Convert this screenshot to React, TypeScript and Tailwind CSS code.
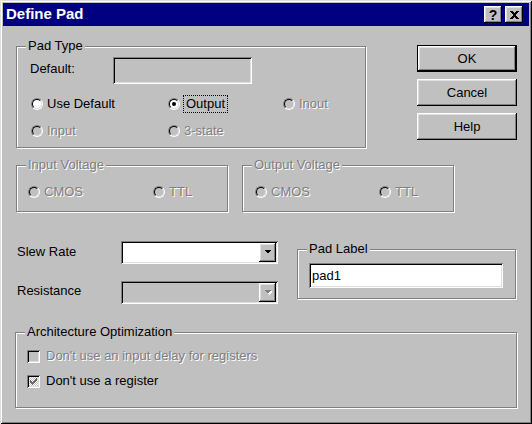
import type { ReactNode } from "react"

const raised =
  "shadow-[inset_-1px_-1px_#000,inset_1px_1px_#fff,inset_-2px_-2px_#808080,inset_2px_2px_#dfdfdf]"
const sunken =
  "shadow-[inset_1px_1px_#808080,inset_-1px_-1px_#fff,inset_2px_2px_#000,inset_-2px_-2px_#dfdfdf]"
const dim = "text-[#808080] [text-shadow:1px_1px_0_#fff]"

function Group({ label, className, children }: { label: string; className: string; children?: ReactNode }) {
  return (
    <div className={`relative border border-[#808080] shadow-[inset_1px_1px_#fff,1px_1px_#fff] ${className}`}>
      <span className={`absolute left-[9px] -top-[9px] px-[2px] leading-4 bg-[#c0c0c0] ${label.includes("Voltage") ? dim : ""}`}>
        {label}
      </span>
      {children}
    </div>
  )
}

function Radio({ label, checked, disabled, focus }: { label: string; checked?: boolean; disabled?: boolean; focus?: boolean }) {
  return (
    <div className="flex items-center h-[18px]">
      <span className="relative w-3 h-3 shrink-0 rounded-full border border-t-[#808080] border-l-[#808080] border-b-white border-r-white">
        <span
          className={`block w-full h-full rounded-full border border-t-black border-l-black border-b-[#dfdfdf] border-r-[#dfdfdf] ${disabled ? "bg-[#c0c0c0]" : "bg-white"}`}
        />
        {checked && <span className="absolute left-[3px] top-[3px] w-1 h-1 rounded-full bg-black" />}
      </span>
      {focus ? (
        <span className="ml-[3px] px-[2px] border border-dotted border-black leading-4">{label}</span>
      ) : (
        <span className={`ml-1 leading-4 ${disabled ? dim : ""}`}>{label}</span>
      )}
    </div>
  )
}

function Check({ label, checked, disabled }: { label: string; checked?: boolean; disabled?: boolean }) {
  return (
    <div className="flex items-center h-[18px]">
      <span
        className={`relative w-[13px] h-[13px] shrink-0 ${sunken} ${checked ? "bg-[repeating-conic-gradient(#fff_0_25%,#c0c0c0_0_50%)] bg-[length:2px_2px]" : "bg-[#c0c0c0]"}`}
      >
        {checked && (
          <svg className="absolute left-[3px] top-[3px]" width="7" height="7" viewBox="0 0 7 7" shapeRendering="crispEdges">
            <path
              fill="#6b6b6b"
              d="M6 0h1v3h-1v1h-1v1h-1v1h-1v1h-1v-1h-1v-1h-1v-3h1v1h1v1h1v-1h1v-1h1z"
            />
          </svg>
        )}
      </span>
      <span className={`ml-[6px] leading-4 ${disabled ? dim : ""}`}>{label}</span>
    </div>
  )
}

function Combo({ disabled }: { disabled?: boolean }) {
  return (
    <div className={`flex justify-end w-[157px] h-[23px] p-[2px] ${sunken} ${disabled ? "bg-[#c0c0c0]" : "bg-white"}`}>
      <div className={`flex items-center justify-center w-[17px] h-[19px] bg-[#c0c0c0] ${raised}`}>
        <svg width="8" height="5" viewBox="0 0 8 5" shapeRendering="crispEdges">
          {disabled && <path fill="#fff" d="M2 1h7l-3.5 4z" />}
          <path fill={disabled ? "#808080" : "#000"} d="M0.5 0h7l-3.5 4z" />
        </svg>
      </div>
    </div>
  )
}

function Btn({ label, def }: { label: string; def?: boolean }) {
  return (
    <div
      className={`flex items-center justify-center w-[100px] h-[27px] ${def ? "border border-black" : ""} ${raised}`}
    >
      {label}
    </div>
  )
}

export default function App() {
  return (
    <div className="w-[532px] h-[424px] bg-[#c0c0c0] p-[3px] flex flex-col font-['Liberation_Sans',Arial,sans-serif] text-[13px] text-black shadow-[inset_1px_1px_#dfdfdf,inset_-1px_-1px_#000,inset_2px_2px_#fff,inset_-2px_-2px_#808080]">
      {/* title bar */}
      <div className="flex items-center h-[23px] bg-[#000080] pl-[3px] pr-[6px]">
        <span className="text-white font-bold text-[15px]">Define Pad</span>
        <div className="ml-auto flex gap-[3px]">
          <div className={`flex items-center justify-center w-[18px] h-[17px] bg-[#c0c0c0] ${raised}`}>
            <span className="font-bold text-[14px] leading-none mt-[1px]">?</span>
          </div>
          <div className={`flex items-center justify-center w-[18px] h-[17px] bg-[#c0c0c0] ${raised}`}>
            <svg width="9" height="8" viewBox="0 0 9 8" shapeRendering="crispEdges">
              <path stroke="#000" strokeWidth="2" d="M1 0l7 8M8 0l-7 8" />
            </svg>
          </div>
        </div>
      </div>

      <div className="flex flex-col pl-[13px] pr-[12px]">
        {/* pad type + buttons */}
        <div className="flex items-start justify-between mt-[19px]">
          <Group label="Pad Type" className="mt-[1px] w-[350px] h-[102px] pl-[14px] pt-[10px]">
            <div className="flex items-center">
              <span className="w-[83px] -ml-[1px] -mt-[4px]">Default:</span>
              <div className={`w-[139px] h-[27px] bg-[#c0c0c0] ${sunken}`} />
            </div>
            <div className="grid grid-cols-[137px_115px_auto] gap-y-[9px] mt-[11px]">
              <Radio label="Use Default" />
              <Radio label="Output" checked focus />
              <Radio label="Inout" disabled />
              <Radio label="Input" disabled />
              <Radio label="3-state" disabled />
            </div>
          </Group>
          <div className="flex flex-col gap-[7px]">
            <Btn label="OK" def />
            <Btn label="Cancel" />
            <Btn label="Help" />
          </div>
        </div>

        {/* voltage */}
        <div className="flex gap-[14px] mt-[17px]">
          <Group label="Input Voltage" className="w-[212px] h-[47px] pl-[11px] pt-[17px]">
            <div className="grid grid-cols-[125px_auto]">
              <Radio label="CMOS" disabled />
              <Radio label="TTL" disabled />
            </div>
          </Group>
          <Group label="Output Voltage" className="w-[212px] h-[47px] pl-[12px] pt-[17px]">
            <div className="grid grid-cols-[124px_auto]">
              <Radio label="CMOS" disabled />
              <Radio label="TTL" disabled />
            </div>
          </Group>
        </div>

        {/* slew / resistance / pad label */}
        <div className="flex items-start mt-[29px]">
          <div className="flex flex-col gap-[17px]">
            <div className="flex items-center">
              <span className="w-[105px] pl-[1px] -mt-[2px]">Slew Rate</span>
              <Combo />
            </div>
            <div className="flex items-center">
              <span className="w-[105px] pl-[1px] -mt-[4px]">Resistance</span>
              <Combo disabled />
            </div>
          </div>
          <Group label="Pad Label" className="ml-[19px] mt-[8px] w-[219px] h-[50px] pl-[11px] pt-[13px]">
            <div className={`flex items-center w-[194px] h-[25px] bg-white pl-[3px] ${sunken}`}>pad1</div>
          </Group>
        </div>

        {/* architecture */}
        <Group label="Architecture Optimization" className="mt-[28px] -ml-[1px] w-[502px] h-[76px] pl-[11px] pt-[14px]">
          <div className="flex flex-col gap-[7px]">
            <Check label="Don't use an input delay for registers" disabled />
            <Check label="Don't use a register" checked />
          </div>
        </Group>
      </div>
    </div>
  )
}
